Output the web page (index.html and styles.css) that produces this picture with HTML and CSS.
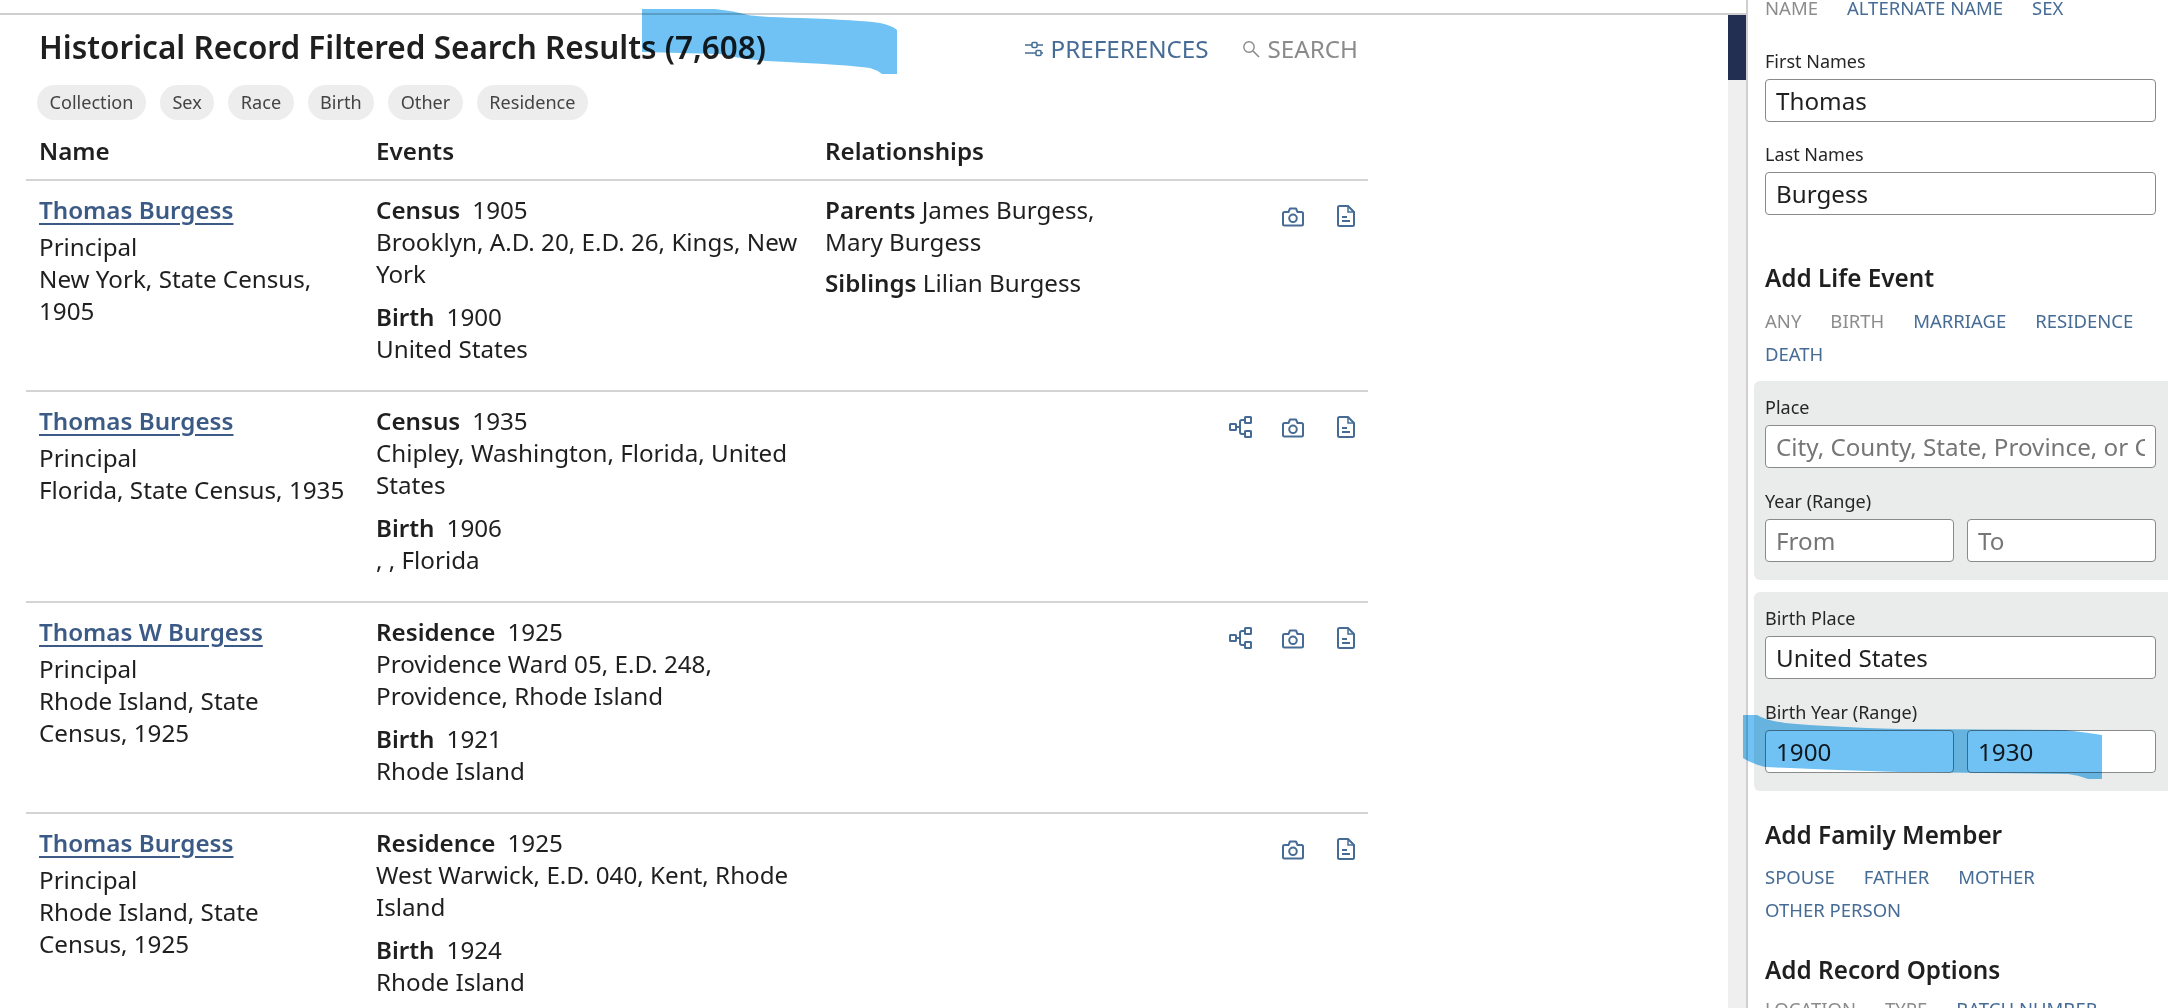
FILE: index.html
```html
<!DOCTYPE html>
<html lang="en">
<head>
    <meta charset="UTF-8">
    <title>Historical Record Filtered Search Results</title>
    <link rel="stylesheet" href="styles.css">
</head>
<body>

    <svg class="icon-defs" width="0" height="0">
        <symbol id="i-sliders" viewBox="0 0 18 18">
            <path d="M0 5h7M12 5h6M0 13h11M16 13h2" fill="none" stroke="currentColor" stroke-width="1.5"/>
            <rect x="7" y="2.5" width="5" height="5" rx="1" fill="none" stroke="currentColor" stroke-width="1.5"/>
            <rect x="11" y="10.5" width="5" height="5" rx="1" fill="none" stroke="currentColor" stroke-width="1.5"/>
        </symbol>
        <symbol id="i-search" viewBox="0 0 18 18">
            <circle cx="7" cy="7" r="5.2" fill="none" stroke="currentColor" stroke-width="1.4"/>
            <path d="M11 11l6 6" fill="none" stroke="currentColor" stroke-width="1.6"/>
        </symbol>
        <symbol id="i-camera" viewBox="0 0 22 20">
            <path d="M2.5 5H6.5L8 1.5H14L15.500 5H19.500Q21 5 21 6.500V17Q21 18.500 19.500 18.500H2.500Q1 18.500 1 17V6.500Q1 5 2.500 5Z" fill="none" stroke="currentColor" stroke-width="2" stroke-linejoin="round"/>
            <circle cx="11" cy="11.300" r="3.800" fill="none" stroke="currentColor" stroke-width="2"/>
        </symbol>
        <symbol id="i-doc" viewBox="0 0 18 22">
            <path d="M2.500 1H11L17 7V19.500Q17 21 15.500 21H2.500Q1 21 1 19.500V2.500Q1 1 2.500 1Z" fill="none" stroke="currentColor" stroke-width="2" stroke-linejoin="round"/>
            <path d="M11 1V7H17" fill="none" stroke="currentColor" stroke-width="1.500"/>
            <path d="M5 12H10M5 16H13" fill="none" stroke="currentColor" stroke-width="2"/>
        </symbol>
        <symbol id="i-tree" viewBox="0 0 23 22">
            <rect x="1" y="8" width="6" height="6" rx="0.5" fill="none" stroke="currentColor" stroke-width="2"/>
            <rect x="16" y="1" width="6" height="6" rx="0.5" fill="none" stroke="currentColor" stroke-width="2"/>
            <rect x="16" y="15" width="6" height="6" rx="0.5" fill="none" stroke="currentColor" stroke-width="2"/>
            <path d="M7 11H11V6Q11 4 13 4H16M11 11V16Q11 18 13 18H16" fill="none" stroke="currentColor" stroke-width="2"/>
        </symbol>
    </svg>

    <div class="left">
        <div class="top-strip"></div>
        <div class="left-body">
            <div class="results">
                <div class="results-head">
                    <h1>Historical Record Filtered Search Results (7,608)</h1>
                    <div class="head-actions">
                        <a class="action"><svg class="ic-head"><use href="#i-sliders"/></svg>PREFERENCES</a>
                        <a class="action muted"><svg class="ic-head"><use href="#i-search"/></svg>SEARCH</a>
                    </div>
                </div>

                <div class="chips">
                    <span class="chip">Collection</span>
                    <span class="chip">Sex</span>
                    <span class="chip">Race</span>
                    <span class="chip">Birth</span>
                    <span class="chip">Other</span>
                    <span class="chip">Residence</span>
                </div>

                <div class="row row-head">
                    <div class="col-name">Name</div>
                    <div class="col-events">Events</div>
                    <div class="col-rel">Relationships</div>
                </div>

                <div class="row">
                    <div class="col-name">
                        <a class="person">Thomas Burgess</a>
                        <p>Principal</p>
                        <p>New York, State Census, 1905</p>
                    </div>
                    <div class="col-events">
                        <div class="event"><b>Census</b>1905<br>Brooklyn, A.D. 20, E.D. 26, Kings, New York</div>
                        <div class="event"><b>Birth</b>1900<br>United States</div>
                    </div>
                    <div class="col-rel">
                        <div class="rel"><strong>Parents</strong> James Burgess, Mary Burgess</div>
                        <div class="rel"><strong>Siblings</strong> Lilian Burgess</div>
                    </div>
                    <div class="col-icons">
                        <svg class="ic-camera"><use href="#i-camera"/></svg>
                        <svg class="ic-doc"><use href="#i-doc"/></svg>
                    </div>
                </div>

                <div class="row">
                    <div class="col-name">
                        <a class="person">Thomas Burgess</a>
                        <p>Principal</p>
                        <p>Florida, State Census, 1935</p>
                    </div>
                    <div class="col-events">
                        <div class="event"><b>Census</b>1935<br>Chipley, Washington, Florida, United States</div>
                        <div class="event"><b>Birth</b>1906<br>, , Florida</div>
                    </div>
                    <div class="col-rel"></div>
                    <div class="col-icons">
                        <svg class="ic-tree"><use href="#i-tree"/></svg>
                        <svg class="ic-camera"><use href="#i-camera"/></svg>
                        <svg class="ic-doc"><use href="#i-doc"/></svg>
                    </div>
                </div>

                <div class="row">
                    <div class="col-name">
                        <a class="person">Thomas W Burgess</a>
                        <p>Principal</p>
                        <p>Rhode Island, State Census, 1925</p>
                    </div>
                    <div class="col-events">
                        <div class="event"><b>Residence</b>1925<br>Providence Ward 05, E.D. 248, Providence, Rhode Island</div>
                        <div class="event"><b>Birth</b>1921<br>Rhode Island</div>
                    </div>
                    <div class="col-rel"></div>
                    <div class="col-icons">
                        <svg class="ic-tree"><use href="#i-tree"/></svg>
                        <svg class="ic-camera"><use href="#i-camera"/></svg>
                        <svg class="ic-doc"><use href="#i-doc"/></svg>
                    </div>
                </div>

                <div class="row">
                    <div class="col-name">
                        <a class="person">Thomas Burgess</a>
                        <p>Principal</p>
                        <p>Rhode Island, State Census, 1925</p>
                    </div>
                    <div class="col-events">
                        <div class="event"><b>Residence</b>1925<br>West Warwick, E.D. 040, Kent, Rhode Island</div>
                        <div class="event"><b>Birth</b>1924<br>Rhode Island</div>
                    </div>
                    <div class="col-rel"></div>
                    <div class="col-icons">
                        <svg class="ic-camera"><use href="#i-camera"/></svg>
                        <svg class="ic-doc"><use href="#i-doc"/></svg>
                    </div>
                </div>
            </div>

            <div class="scrollbar"><div class="scroll-thumb"></div></div>
        </div>
    </div>

    <aside class="panel">
        <div class="tabs tabs-top">
            <a class="muted">NAME</a><a>ALTERNATE NAME</a><a>SEX</a>
        </div>

        <label class="field-label first">First Names</label>
        <input class="field" type="text" value="Thomas">
        <label class="field-label">Last Names</label>
        <input class="field" type="text" value="Burgess">

        <h3 class="section-title life">Add Life Event</h3>
        <div class="tabs">
            <a class="muted">ANY</a><a class="muted">BIRTH</a><a>MARRIAGE</a><a>RESIDENCE</a><a>DEATH</a>
        </div>

        <div class="group">
            <label class="field-label first">Place</label>
            <input class="field" type="text" placeholder="City, County, State, Province, or Country">
            <label class="field-label">Year (Range)</label>
            <div class="range">
                <input class="field" type="text" placeholder="From">
                <input class="field" type="text" placeholder="To">
            </div>
        </div>

        <div class="group">
            <label class="field-label first">Birth Place</label>
            <input class="field" type="text" value="United States">
            <label class="field-label">Birth Year (Range)</label>
            <div class="range">
                <input class="field" type="text" value="1900">
                <input class="field" type="text" value="1930">
            </div>
        </div>

        <h3 class="section-title family">Add Family Member</h3>
        <div class="tabs">
            <a>SPOUSE</a><a>FATHER</a><a>MOTHER</a><a>OTHER PERSON</a>
        </div>

        <h3 class="section-title options">Add Record Options</h3>
        <div class="tabs">
            <a class="muted">LOCATION</a><a class="muted">TYPE</a><a>BATCH NUMBER</a>
        </div>
    </aside>

    <!-- hand drawn marker strokes on top of the screenshot -->
    <svg class="marker" width="2168" height="1008" viewBox="0 0 2168 1008">
        <path d="M642 9H715Q735 11 748 15Q760 17 800 18Q860 20 880 23Q893 26 897 30V74H882Q877 70 870 68Q850 65 767 61Q740 59 720 54L642 52Z"/>
        <path d="M1743 715H1757Q1765 720 1785 723Q1830 727 1900 729L2065 730Q2090 733 2102 735V779H2088Q2078 775 2068 774L1900 772Q1830 770 1765 767Q1750 763 1743 758Z"/>
    </svg>

</body>
</html>
```

FILE: styles.css
```css
* { box-sizing: border-box; }
html, body { margin: 0; padding: 0; }
body {
    display: flex;
    width: 2168px;
    height: 1008px;
    overflow: hidden;
    position: relative;
    font-family: "Noto Sans", Arial, sans-serif;
    font-size: 24.2px;
    line-height: 32px;
    color: #1f1f1f;
    background: #fff;
}
p { margin: 0; }
a { color: #466c96; }

.icon-defs { position: absolute; }

.left { width: 1746px; display: flex; flex-direction: column; }
.top-strip { height: 15px; border-bottom: 2px solid #cfcfcf; flex: none; }
.left-body { flex: 1; display: flex; min-height: 0; }

.results { width: 1728px; padding-left: 26px; }
.scrollbar { width: 18px; background: #efefef; }
.scroll-thumb { height: 65px; background: #232f52; }

.results-head {
    width: 1342px;
    display: flex;
    justify-content: space-between;
    align-items: center;
    padding: 12px 10px 0 13px;
    height: 52px;
}
h1 { margin: 0; font-size: 31.5px; line-height: 40px; font-weight: 600; }
.head-actions { display: flex; gap: 33px; margin-top: 3px; }
.action { display: flex; align-items: center; gap: 8px; color: #466c96; }
.action.muted { color: #8a8a8a; }
.ic-head { width: 18px; height: 18px; }

.chips { display: flex; gap: 14px; padding: 18px 0 0 11px; }
.chip {
    height: 35px;
    line-height: 35px;
    padding: 0 12.5px;
    border-radius: 18px;
    background: #ededed;
    font-size: 18.1px;
    color: #444;
}

.row {
    width: 1342px;
    display: grid;
    grid-template-columns: 337px 449px 290px 1fr;
    padding: 13px 0 25px 13px;
    border-bottom: 2px solid #d4d4d4;
}
.row-head {
    padding: 0 0 0 13px;
    height: 46px;
    margin-top: 15px;
    font-weight: 600;
}
.col-name { padding-right: 31px; }
.col-events { padding-right: 20px; }
.person { font-weight: 600; color: #3b5a85; text-decoration: underline; text-underline-offset: 4px; }
.col-name p:first-of-type { margin-top: 5px; }
.event + .event { margin-top: 11px; }
.event b { font-weight: 600; margin-right: 12px; }
.rel + .rel { margin-top: 9px; }
.rel strong { font-weight: 600; }

.col-icons {
    display: flex;
    justify-content: flex-end;
    align-items: flex-start;
    gap: 30px;
    padding: 11px 13px 0 0;
    color: #466c96;
}
.ic-camera { width: 22px; height: 20px; margin-top: 2px; }
.ic-doc { width: 18px; height: 22px; margin-left: 3px; }
.ic-tree { width: 23px; height: 22px; }

.panel {
    width: 422px;
    height: 1008px;
    overflow: hidden;
    border-left: 2px solid #cfcfcf;
    padding: 0 12px 0 17px;
    font-size: 18px;
}
.tabs { display: flex; flex-wrap: wrap; column-gap: 29px; line-height: 33px; font-size: 18.5px; }
.tabs a { white-space: nowrap; }
.tabs .muted { color: #8c8c8c; }
.tabs-top { margin-top: -9px; }

.field-label { display: block; line-height: 24px; margin: 20px 0 6px; color: #262626; }
.group .field-label { margin-top: 21px; }
.group .field-label.first { margin-top: 0; }
.tabs-top + .field-label { margin-top: 25px; }
.field {
    display: block;
    width: 100%;
    height: 43px;
    padding: 0 10px;
    border: 1px solid #8a8a8a;
    border-radius: 4px;
    background: #fff;
    font-family: inherit;
    font-size: 24.2px;
    color: #1f1f1f;
}
.field::placeholder { color: #767676; opacity: 1; }
.range { display: flex; gap: 13px; }
.range .field { flex: 1; min-width: 0; }

.section-title { margin: 29px 0 11px; font-size: 24.3px; line-height: 30px; font-weight: 600; }
.section-title.life { margin-top: 48px; }
.section-title.family { margin-bottom: 10px; }
.section-title.options { margin-bottom: 7px; }

.group {
    margin: 11px -12px 12px -11px;
    padding: 14px 12px 18px 11px;
    background: #eaebeb;
    border-radius: 6px 0 0 6px;
}
.group + .group { margin-top: 12px; }

.marker {
    position: absolute;
    left: 0;
    top: 0;
    mix-blend-mode: multiply;
    pointer-events: none;
}
.marker path { fill: #6fc2f3; }
```
